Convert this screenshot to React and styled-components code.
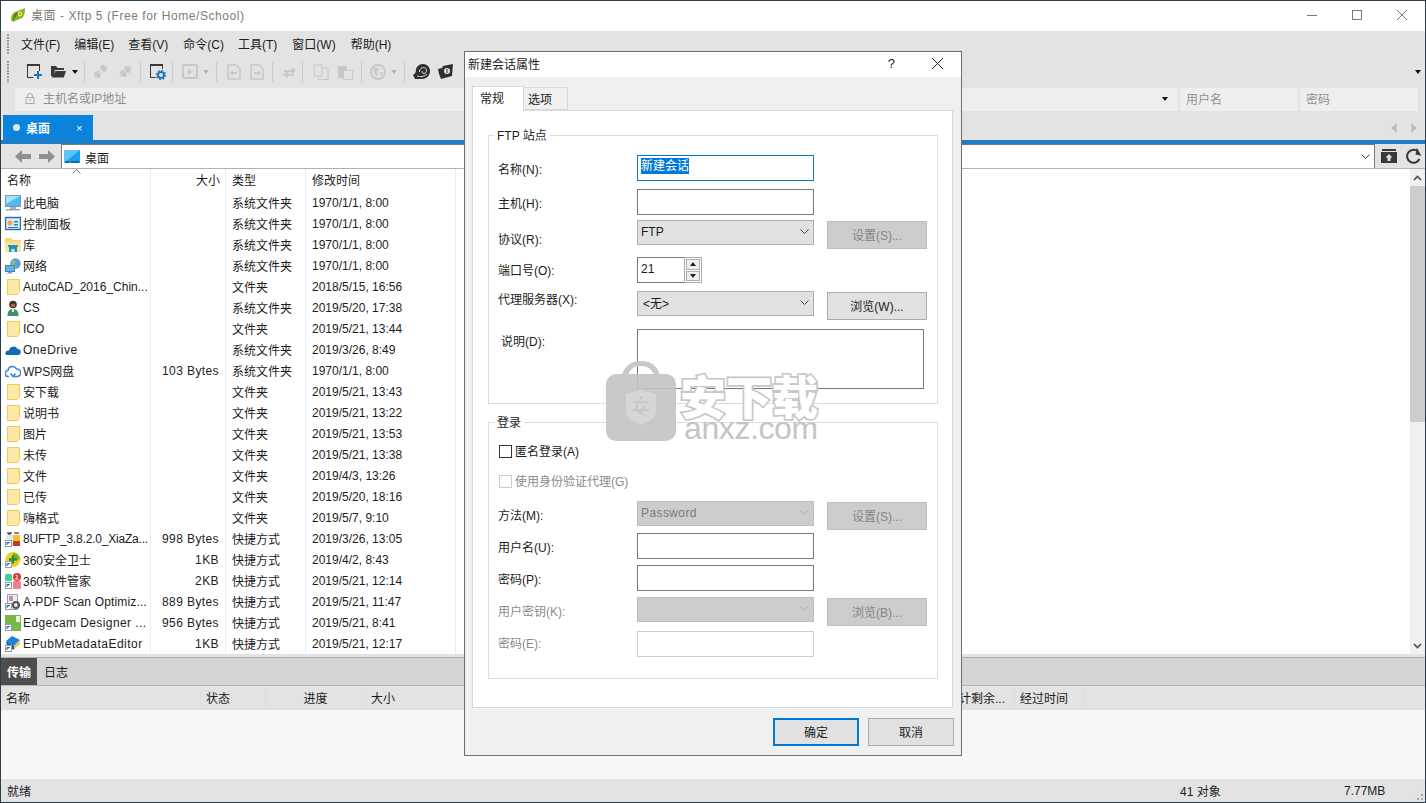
import React from 'react';
import styled, { createGlobalStyle } from 'styled-components';

const GlobalStyle = createGlobalStyle`
  html, body {
    margin: 0;
    padding: 0;
    overflow: hidden;
    background: #fff;
  }
  body {
    font-family: "Liberation Sans", "Noto Sans CJK SC", sans-serif;
    font-size: 12px;
    color: #1c1c1c;
  }
  * { box-sizing: border-box; }
  svg { display: block; flex: none; }
`;

const AppWindow = styled.div`
  position: relative;
  width: 1426px;
  height: 803px;
  border: 1px solid #2c3e4e;
  background: #e3e3e3;
  display: flex;
  flex-direction: column;
  overflow: hidden;
`;

const TitleBar = styled.div`
  height: 30px;
  flex: none;
  background: #fff;
  display: flex;
  align-items: center;
  padding-left: 9px;
  padding-bottom: 2px;
  color: #7c7c7c;
`;

const TitleText = styled.span`
  margin-left: 5px;
  padding-bottom: 2px;
  letter-spacing: 0.55px;
  flex: 1;
`;

const WinButtons = styled.div`
  display: flex;
  align-items: center;
  gap: 35px;
  padding-right: 18px;
`;

const Bar = styled.div`
  height: ${p => p.$h}px;
  flex: none;
  display: flex;
  align-items: center;
  position: relative;
`;

const Gripper = styled.div`
  width: 2px;
  height: ${p => p.$h}px;
  margin-left: 6px;
  background: repeating-linear-gradient(to bottom, #9a9a9a 0 2px, transparent 2px 3px);
`;

const MenuItem = styled.span`
  margin-left: ${p => p.$ml}px;
  white-space: nowrap;
`;

const Slot = styled.div`
  margin-left: ${p => p.$ml}px;
  display: flex;
  align-items: center;
`;

const ToolSep = styled.div`
  width: 1px;
  height: 20px;
  margin-left: ${p => p.$ml}px;
  background: #cdcdcd;
`;

const Caret = styled.div`
  width: 0;
  height: 0;
  margin-left: ${p => p.$ml || 0}px;
  border-left: 3.5px solid transparent;
  border-right: 3.5px solid transparent;
  border-top: 4px solid ${p => p.$off ? '#b4b4b4' : '#111'};
`;

const EndCaret = styled(Caret)`
  margin-left: auto;
  margin-right: 4px;
`;

const AddressWrap = styled.div`
  height: 28px;
  flex: none;
  padding: 1px 7px 4px 14px;
  display: flex;
  gap: 2px;
`;

const AddressField = styled.div`
  width: ${p => p.$w ? p.$w + 'px' : 'auto'};
  flex: ${p => p.$w ? 'none' : 1};
  background: #eeeeee;
  display: flex;
  align-items: center;
  padding-left: ${p => p.$pl}px;
  padding-right: 10px;
  padding-bottom: 2px;
  color: #8e8e8e;
`;

const HostText = styled.span`
  margin-left: 8px;
  padding-bottom: 2px;
  flex: 1;
`;

const TabStrip = styled.div`
  height: 25px;
  flex: none;
  display: flex;
  align-items: stretch;
  padding-left: 2px;
`;

const SessionTab = styled.div`
  width: 90px;
  background: #0a83dd;
  color: #fff;
  display: flex;
  align-items: center;
  padding-left: 10px;
  font-weight: 700;
`;

const TabDot = styled.span`
  width: 7px;
  height: 7px;
  border-radius: 50%;
  background: #d8e8f4;
  margin-right: 6px;
`;

const TabClose = styled.span`
  margin-left: 26px;
  font-weight: 400;
  font-size: 11px;
`;

const TabNav = styled.div`
  margin-left: auto;
  display: flex;
  align-items: center;
  gap: 14px;
  padding-right: 8px;
`;

const NavTriangle = styled.div`
  width: 0;
  height: 0;
  border-top: 5px solid transparent;
  border-bottom: 5px solid transparent;
  ${p => p.$left ? 'border-right: 6px solid #bdbdbd;' : 'border-left: 6px solid #bdbdbd;'}
`;

const BlueLine = styled.div`
  height: 4px;
  flex: none;
  background: #0a83dd;
  border-top: 1px solid #5f6a72;
`;

const PathBar = styled.div`
  height: 24px;
  flex: none;
  display: flex;
  align-items: stretch;
  padding-left: 14px;
`;

const PathArrows = styled.div`
  width: 46px;
  display: flex;
  align-items: center;
  gap: 8px;
`;

const PathInput = styled.div`
  width: 1314px;
  background: #fff;
  border: 1px solid #7a7a7a;
  border-bottom: none;
  display: flex;
  align-items: center;
  padding-left: 2px;
  padding-right: 4px;
`;

const PathText = styled.span`
  margin-left: 5px;
  padding-top: 2px;
  flex: 1;
`;

const PathTools = styled.div`
  flex: 1;
  display: flex;
  align-items: center;
  padding-left: 6px;
  gap: 9px;
`;

const ListArea = styled.div`
  height: 486px;
  flex: none;
  display: flex;
  background: #fff;
  border-top: 1px solid #b0b0b0;
`;

const ListTable = styled.div`
  flex: 1;
  min-width: 0;
`;

const ListRow = styled.div`
  display: grid;
  grid-template-columns: 150px 75px 80px 150px;
  height: ${p => p.$h || 21}px;
`;

const Cell = styled.div`
  position: relative;
  border-right: 1px solid #e8eef5;
  display: flex;
  align-items: center;
  white-space: nowrap;
  overflow: hidden;
  padding-left: ${p => p.$pl ?? 6}px;
  padding-right: ${p => p.$pr ?? 0}px;
  padding-bottom: ${p => p.$pb ?? 0}px;
  justify-content: ${p => p.$right ? 'flex-end' : 'flex-start'};
`;

const SortMark = styled.div`
  position: absolute;
  top: 0;
  left: 71px;
`;

const NameText = styled.span`
  margin-left: 2px;
  letter-spacing: ${p => p.$ls || 0}px;
`;

const SizeText = styled.span`
  letter-spacing: 0.4px;
`;

const Scrollbar = styled.div`
  width: 15px;
  flex: none;
  background: #f0f0f0;
  display: flex;
  flex-direction: column;
`;

const ScrollEnd = styled.div`
  height: 17px;
  display: flex;
  align-items: center;
  justify-content: center;
`;

const ScrollThumb = styled.div`
  height: 236px;
  background: #cdcdcd;
`;

const ScrollFill = styled.div`
  flex: 1;
`;

const LowerTabs = styled.div`
  margin-top: 3px;
  height: 29px;
  flex: none;
  background: #d5d5d5;
  border-top: 1px solid #adadad;
  border-bottom: 1px solid #b6b6b6;
  display: flex;
  align-items: stretch;
`;

const LowerTab = styled.div`
  width: ${p => p.$active ? 36 : 45}px;
  display: flex;
  align-items: center;
  padding-left: ${p => p.$active ? 6 : 7}px;
  background: ${p => p.$active ? '#4d4d4d' : 'transparent'};
  color: ${p => p.$active ? '#fff' : '#1c1c1c'};
  font-weight: ${p => p.$active ? 700 : 400};
`;

const TransferHead = styled.div`
  height: 24px;
  flex: none;
  display: flex;
  background: #e3e3e3;
  border-bottom: 1px solid #d7dfea;
`;

const HeadCell = styled.div`
  width: ${p => p.$w}px;
  flex: none;
  display: flex;
  align-items: center;
  justify-content: ${p => p.$center ? 'center' : 'flex-start'};
  padding-left: ${p => p.$center ? 0 : 5}px;
  border-right: 1px solid #d7dfea;
  white-space: nowrap;
  overflow: hidden;
`;

const TransferBody = styled.div`
  flex: 1;
  background: #f7f7f7;
`;

const StatusBar = styled.div`
  height: 23px;
  flex: none;
  display: flex;
  align-items: center;
  padding-left: 6px;
  position: relative;
`;

const StatusReady = styled.span`
  flex: 1;
`;

const StatusObjects = styled.span`
  width: 164px;
`;

const StatusSize = styled.span`
  width: 81px;
`;

const SizeGrip = styled.div`
  position: absolute;
  right: 1px;
  bottom: 1px;
  width: 11px;
  height: 11px;
  background: radial-gradient(circle at 1px 1px, #a9a9a9 1px, transparent 1px) 0 0 / 4px 4px;
  clip-path: polygon(100% 0, 100% 100%, 0 100%);
`;

/* dialog */
const Dialog = styled.div`
  position: absolute;
  left: 463px;
  top: 50px;
  width: 498px;
  height: 705px;
  background: #f0f0f0;
  border: 1px solid #6d6d6d;
  display: flex;
  flex-direction: column;
`;

const DialogTitle = styled.div`
  height: 25px;
  flex: none;
  background: #fff;
  display: flex;
  align-items: center;
  padding-left: 3px;
  padding-bottom: 2px;
`;

const DialogTitleText = styled.span`
  flex: 1;
`;

const HelpMark = styled.span`
  font-size: 13px;
  margin-right: 37px;
`;

const CloseSlot = styled.div`
  margin-right: 18px;
`;

const DialogTabs = styled.div`
  height: 34px;
  flex: none;
  display: flex;
  align-items: flex-end;
  padding-left: 7px;
  position: relative;
  z-index: 1;
  margin-bottom: -1px;
`;

const DialogTab = styled.div`
  height: ${p => p.$active ? 25 : 23}px;
  width: ${p => p.$active ? 52 : 45}px;
  margin-left: ${p => p.$active ? 0 : -1}px;
  margin-bottom: ${p => p.$active ? 0 : 1}px;
  background: ${p => p.$active ? '#fff' : '#f0f0f0'};
  border: 1px solid #d9d9d9;
  border-bottom: ${p => p.$active ? 'none' : '1px solid #d9d9d9'};
  display: flex;
  align-items: ${p => p.$active ? 'flex-start' : 'center'};
  padding-top: ${p => p.$active ? 2 : 0}px;
  padding-left: ${p => p.$active ? 7 : 4}px;
`;

const TabPanel = styled.div`
  margin-left: 7px;
  width: 481px;
  height: 598px;
  flex: none;
  background: #fff;
  border: 1px solid #d9d9d9;
  padding: 24px 14px 0 15px;
`;

const Group = styled.div`
  position: relative;
  border: 1px solid #dcdcdc;
  padding: ${p => p.$pt}px 9px ${p => p.$pb}px;
  margin-top: ${p => p.$mt || 0}px;
  width: 450px;
`;

const GroupTitle = styled.span`
  position: absolute;
  left: 5px;
  top: -8px;
  padding: 0 3px;
  line-height: 16px;
  background: #fff;
`;

const FieldRow = styled.div`
  display: grid;
  grid-template-columns: 139px 177px 13px 100px;
  margin-top: ${p => p.$gap || 0}px;
  align-items: start;
`;

const FieldLabel = styled.div`
  padding-top: ${p => p.$pt}px;
  padding-left: ${p => p.$pl || 0}px;
  line-height: 16px;
  color: ${p => p.$off ? '#8a8a8a' : '#1c1c1c'};
  white-space: nowrap;
`;

const TextBox = styled.div`
  height: 26px;
  background: #fff;
  border: 1px solid ${p => p.$focus ? '#0078d7' : p.$off ? '#cccccc' : '#7a7a7a'};
  padding: 2px 0 0 3px;
`;

const SelectedText = styled.span`
  display: inline-block;
  background: #0078d7;
  color: #fff;
  height: 16px;
  line-height: 17px;
`;

const SelectBox = styled.div`
  height: 25px;
  background: ${p => p.$off ? '#cccccc' : '#e1e1e1'};
  border: 1px solid ${p => p.$off ? '#bfbfbf' : '#adadad'};
  display: flex;
  align-items: center;
  justify-content: space-between;
  padding: 0 4px 2px ${p => p.$pl ?? 3}px;
  color: ${p => p.$off ? '#7a7a7a' : '#1c1c1c'};
  letter-spacing: ${p => p.$spaced ? '0.4px' : '0'};
`;

const SideButton = styled.div`
  grid-column: 4;
  margin-top: 1px;
  height: 28px;
  background: ${p => p.$off ? '#cccccc' : '#e1e1e1'};
  border: 1px solid ${p => p.$off ? '#bfbfbf' : '#adadad'};
  color: ${p => p.$off ? '#858585' : '#1c1c1c'};
  display: flex;
  align-items: center;
  justify-content: center;
  padding-bottom: 2px;
`;

const SpinWrap = styled.div`
  display: flex;
  width: 65px;
  height: 26px;
`;

const SpinInput = styled.div`
  width: 47px;
  border: 1px solid #7a7a7a;
  border-right: none;
  padding: 0 0 2px 3px;
  display: flex;
  align-items: center;
`;

const SpinButtons = styled.div`
  flex: 1;
  border: 1px solid #adadad;
  padding: 1px;
  display: flex;
  flex-direction: column;
  gap: 1px;
`;

const SpinButton = styled.div`
  flex: 1;
  background: #f0f0f0;
  border: 1px solid #adadad;
  display: flex;
  align-items: center;
  justify-content: center;
`;

const SpinCaret = styled.div`
  width: 0;
  height: 0;
  border-left: 3px solid transparent;
  border-right: 3px solid transparent;
  ${p => p.$up ? 'border-bottom: 4px solid #222;' : 'border-top: 4px solid #222;'}
`;

const NoteBox = styled.div`
  width: 287px;
  height: 60px;
  background: #fff;
  border: 1px solid #7a7a7a;
  grid-column: 2 / span 3;
`;

const CheckRow = styled.div`
  display: flex;
  align-items: center;
  height: 13px;
  margin-top: ${p => p.$gap || 0}px;
  margin-left: 1px;
  color: ${p => p.$off ? '#8a8a8a' : '#1c1c1c'};
`;

const CheckBox = styled.div`
  width: 13px;
  height: 13px;
  background: #fff;
  border: 1px solid ${p => p.$off ? '#cccccc' : '#333'};
  margin-right: 3px;
`;

const CheckText = styled.span`
  padding-bottom: 2px;
`;

const DialogFooter = styled.div`
  flex: 1;
  display: flex;
  justify-content: flex-end;
  align-items: flex-start;
  gap: 9px;
  padding: 10px 7px 0 0;
`;

const FooterButton = styled.div`
  width: 86px;
  height: 28px;
  background: #e1e1e1;
  border: ${p => p.$primary ? '2px solid #0078d7' : '1px solid #adadad'};
  display: flex;
  align-items: center;
  justify-content: center;
  padding-bottom: 2px;
`;

/* watermark */
const Watermark = styled.div`
  position: absolute;
  left: 604px;
  top: 359px;
  display: flex;
  pointer-events: none;
`;

const MarkText = styled.div`
  margin-left: 3px;
  margin-top: 11px;
  display: flex;
  flex-direction: column;
`;

const MarkCn = styled.div`
  font-family: "Noto Sans CJK SC", sans-serif;
  font-weight: 900;
  font-size: 46px;
  line-height: 46px;
  color: #fff;
  -webkit-text-stroke: 3.5px #c8c8c8;
  paint-order: stroke fill;
`;

const MarkEn = styled.div`
  font-family: "Liberation Sans", sans-serif;
  font-size: 32px;
  line-height: 22px;
  margin-left: 4px;
  letter-spacing: -0.4px;
  color: #c4c4c4;
`;

const DARK = '#383838';
const OFF = '#c8c8c8';

const Ico = ({ w = 16, h = 16, children }) => (
  <svg width={w} height={h} viewBox={`0 0 ${w} ${h}`} fill="none">{children}</svg>
);

const AppLogo = () => (
  <Ico w={16} h={16}>
    <path d="M1 13 Q1 6 5 5 L15 1 Q15 9 12 11 Q7 13 3 15 Z" fill="#86b52a" />
    <path d="M3 14 Q3 8 6 6 L9 5 Q6 9 3 14Z" fill="#4e7a18" />
    <circle cx="10" cy="7" r="2.400" fill="#d8e46a" />
    <circle cx="10" cy="7" r="1" fill="#86b52a" />
  </Ico>
);

const NewSessionIcon = () => (
  <Ico w={17} h={17}>
    <path d="M1 2h13" stroke={DARK} strokeWidth="2" />
    <path d="M1.500 2v12.500h6M13.500 2v6" stroke={DARK} />
    <path d="M12 8v8M8 12h8" stroke="#1a76b8" strokeWidth="2" />
  </Ico>
);

const OpenFolderIcon = () => (
  <Ico w={17} h={15}>
    <path d="M1 2h5l1.500 2H14v2H5L3 12H1z" fill={DARK} />
    <path d="M5.500 7H16l-2.200 6.500H1.500z" fill={DARK} />
  </Ico>
);

// the two disabled connect / disconnect plugs, drawn on a diagonal
const PlugIcon = ({ joined }) => (
  <Ico w={17} h={17}>
    <g transform="rotate(-45 8.500 8.500)" fill={OFF}>
      <rect x={joined ? 3 : 1.500} y="5" width="5" height="7" rx="1.500" />
      <rect x={joined ? 9 : 10.500} y="5" width="5" height="7" rx="1.500" />
      {joined
        ? <path d="M8 6.500h1v1H8zM8 9.500h1v1H8z" />
        : <path d="M6.500 6.500h2v1h-2zM6.500 9.500h2v1h-2z" />}
      <path d="M14 8h3v1h-3zM0 8h3v1H0z" />
    </g>
  </Ico>
);

const GearWindowIcon = () => (
  <Ico w={17} h={17}>
    <path d="M1 2h13" stroke={DARK} strokeWidth="2" />
    <path d="M1.500 2v12.500h5M13.500 2v4" stroke={DARK} />
    <circle cx="12" cy="12" r="3" stroke="#1a76b8" strokeWidth="2" />
    <circle cx="12" cy="12" r="4.600" stroke="#1a76b8" strokeWidth="1.400" strokeDasharray="1.600 2" />
  </Ico>
);

const PlayWindowIcon = () => (
  <Ico w={16} h={15}>
    <rect x="1" y="1" width="14" height="13" rx="1" stroke={OFF} strokeWidth="2" />
    <path d="M6 4.500l5 3-5 3z" fill={OFF} />
  </Ico>
);

const DocArrowIcon = ({ back }) => (
  <Ico w={14} h={16}>
    <path d="M1 1h8l4 4v10H1z" stroke={OFF} strokeWidth="1.600" />
    <path d={back ? 'M10 8H6V6L3 9l3 3v-2h4z' : 'M4 8h4V6l3 3-3 3v-2H4z'} fill={OFF} />
  </Ico>
);

const SwapIcon = () => (
  <Ico w={16} h={13}>
    <path d="M3 5h8V2l4 3.500L11 9V7H3z" fill={OFF} />
    <path d="M13 8.500H7V6.500L1 9.500 7 13v-2h6z" fill={OFF} opacity="0.9" />
  </Ico>
);

const CopyIcon = () => (
  <Ico w={16} h={16}>
    <path d="M5 4h10v11.500H5z" stroke={OFF} />
    <path d="M1 1h8v11H1z" fill="#e3e3e3" stroke={OFF} />
  </Ico>
);

const PasteIcon = () => (
  <Ico w={16} h={16}>
    <path d="M1 2h9v12H1z" fill={OFF} />
    <path d="M6.500 6.500h9v9h-9z" fill="#e3e3e3" stroke={OFF} />
  </Ico>
);

const GlobeIcon = () => (
  <Ico w={16} h={16}>
    <circle cx="8" cy="8" r="7" stroke={OFF} strokeWidth="2" />
    <path d="M4 4h4l1 2-3 2 2 2-1 3-3-4zM10 8h3l-1 3-2 1z" fill={OFF} />
  </Ico>
);

const ShellIcon = () => (
  <Ico w={17} h={15}>
    <path d="M0 11c2-1 3-3 3-5 0-3 3-6 7-6s7 3 7 7-3 8-8 8H2z" fill="#2f2f2f" />
    <path d="M6.500 8c0-3 2.500-5 5-4.300 2.500.8 2.700 4 .8 5.300-1.500 1-3.600.2-3.300-1.800M4 12c3 1 7 1 10-2" stroke="#e3e3e3" />
  </Ico>
);

const FtpMarkIcon = () => (
  <Ico w={17} h={15}>
    <path d="M1 5l4-1 1-2 10-2-1 12-11 3-2-5z" fill="#2f2f2f" />
    <circle cx="10" cy="7" r="3" fill="#e3e3e3" />
    <path d="M10 5v4" stroke="#2f2f2f" />
  </Ico>
);

const LockIcon = () => (
  <Ico w={10} h={11}>
    <path d="M2.500 4.500V3a2.500 2.500 0 0 1 5 0v1.500" stroke="#aaa" />
    <rect x="1" y="4.500" width="8" height="6" stroke="#aaa" />
    <path d="M4 7h2" stroke="#aaa" />
  </Ico>
);

const BigArrow = ({ back }) => (
  <Ico w={16} h={13}>
    <path d={back ? 'M0 6.500L7 0v4h9v5H7v4z' : 'M16 6.500L9 0v4H0v5h9v4z'} fill="#8f8f8f" />
  </Ico>
);

const Chevron = ({ color = '#444', up }) => (
  <svg width="9" height="5" viewBox="0 0 9 5" fill="none">
    <path d={up ? 'M.5 4.500l4-4 4 4' : 'M.5.5l4 4 4-4'} stroke={color} />
  </svg>
);

const ThickChevron = ({ up }) => (
  <svg width="9" height="6" viewBox="0 0 9 6" fill="none">
    <path d={up ? 'M1 5l3.500-3.500L8 5' : 'M1 1l3.500 3.500L8 1'} stroke="#505050" strokeWidth="1.700" />
  </svg>
);

const UpFolderIcon = () => (
  <Ico w={16} h={14}>
    <path d="M1 0h14v2H1z" fill={DARK} />
    <path d="M0 3h16v11H0z" fill={DARK} />
    <path d="M8 5l3.500 3.500H9.500V12h-3V8.500h-2z" fill="#e3e3e3" />
  </Ico>
);

const RefreshIcon = () => (
  <Ico w={16} h={16}>
    <path d="M13.500 11A6.500 6.500 0 1 1 12 3.500" stroke={DARK} strokeWidth="2" />
    <path d="M10 0v7h6z" fill={DARK} transform="rotate(10 12 4)" />
  </Ico>
);

const PathDesktop = () => (
  <Ico w={16} h={14}>
    <rect width="16" height="13" fill="#19a0ef" />
    <path d="M0 0h16L0 13z" fill="#5ec3f8" />
    <path d="M1 12h4M7 12h8" stroke="#1b3040" />
  </Ico>
);

const Shortcut = () => (
  <g>
    <rect x="0.500" y="9.500" width="6" height="6" fill="#fff" stroke="#9b9b9b" />
    <path d="M2 14v-2.500h2.500M2.500 13l2-2" stroke="#1f5fb4" />
  </g>
);

const FileIcon = ({ kind }) => {
  let body = null;
  switch (kind) {
    case 'pc':
      body = (
        <>
          <rect x="0.500" y="0.500" width="15" height="11" fill="#53b9f4" stroke="#7b98ad" />
          <path d="M1 1h14L1 9z" fill="#a5e0fb" />
          <path d="M5 12h6v2H5z" fill="#9fb2c0" />
          <path d="M1 14h14v1.500H1z" fill="#9aa6ae" />
        </>
      );
      break;
    case 'panel':
      body = (
        <>
          <rect x="0.500" y="1.500" width="15" height="12" fill="#d6ecfb" stroke="#1f6fa8" strokeWidth="1.400" />
          <circle cx="5" cy="7" r="2.500" fill="#f2a43a" />
          <path d="M9 5h4v1.500H9zM9 8h4v1.500H9zM3 11h10v1H3z" fill="#2a80bd" />
        </>
      );
      break;
    case 'lib':
      body = (
        <>
          <path d="M0 1h6l1.500 2H16v12H0z" fill="#f7d774" />
          <path d="M0 5h16v10H0z" fill="#fbe49a" />
          <path d="M4 9h8v6h-2.500v-3h-3v3H4z" fill="#1f8fd6" />
          <path d="M3 8h10v2H3z" fill="#1f8fd6" />
        </>
      );
      break;
    case 'net':
      body = (
        <>
          <circle cx="10.500" cy="5.500" r="5.200" fill="#5aa0d8" />
          <path d="M7 2l4 1-2 3 3 2-2 2.500L7 7z" fill="#8cc37c" />
          <rect x="0.500" y="7.500" width="9" height="6" fill="#53b9f4" stroke="#5c7d94" />
          <path d="M3 14h4v1.500H1V15h2z" fill="#8a9aa6" />
        </>
      );
      break;
    case 'folder':
      body = (
        <path d="M2.500 0.500h12v12l-2 3h-10z" fill="#fde9a5" stroke="#eccb5d" />
      );
      break;
    case 'user':
      body = (
        <>
          <circle cx="8" cy="4.500" r="3.800" fill="#4a3226" />
          <path d="M6 4h4v3H6z" fill="#a06a48" />
          <path d="M2.500 16c0-5 2-7 5.500-7s5.500 2 5.500 7z" fill="#3f8f6e" />
          <path d="M7 9h2v3H7z" fill="#e8e8e8" />
        </>
      );
      break;
    case 'onedrive':
      body = (
        <>
          <path d="M4 9a4.500 4.500 0 0 1 8.500-2A3 3 0 0 1 13 13H5z" fill="#0f6cbd" />
          <path d="M1 13c-1.500-2 0-5 3-4.500 2-.5 3 1 4 1.500l-1 3z" fill="#0f6cbd" />
        </>
      );
      break;
    case 'wps':
      body = (
        <path d="M4 13.500H3.500a3 3 0 0 1-.5-6 4.500 4.500 0 0 1 8.500-1.500 3.700 3.700 0 0 1 1 7.500H8M5.500 10.500l2.500 3 2.500-3" stroke="#3f7fe0" strokeWidth="1.500" />
      );
      break;
    case 'ftp':
      body = (
        <>
          <rect x="1" y="4" width="14" height="11" fill="#dfe6f0" />
          <path d="M8 4h7v6H8z" fill="#f4c022" />
          <path d="M2 2h5M3 3h3M9 2h5" stroke="#111" />
          <path d="M8 10h7v5H8z" fill="#c23a2c" />
          <Shortcut />
        </>
      );
      break;
    case '360safe':
      body = (
        <>
          <circle cx="8" cy="7.500" r="7.500" fill="#e9d21f" />
          <path d="M8 1a7 7 0 0 1 7 6.500H8z" fill="#6dbb2c" />
          <path d="M8 3.500v8M4 7.500h8" stroke="#2d8a2d" strokeWidth="2.400" />
          <Shortcut />
        </>
      );
      break;
    case '360mgr':
      body = (
        <>
          <rect x="0" y="1" width="7" height="7" rx="1.500" fill="#3fd08a" />
          <rect x="8" y="8" width="8" height="8" rx="1.500" fill="#f47f86" />
          <rect x="0" y="9" width="7" height="7" fill="#ef7d84" />
          <circle cx="12" cy="4" r="4" fill="#d8333a" />
          <path d="M10.500 3c1-1.500 3-.5 1.500 1L10.500 6h3" stroke="#fff" />
          <Shortcut />
        </>
      );
      break;
    case 'pdf':
      body = (
        <>
          <path d="M2.500 0.500h10v15h-10z" fill="#f3eef6" stroke="#9b9bb0" />
          <path d="M4 2h4v5H4z" fill="#c888c8" />
          <circle cx="11" cy="11" r="3" stroke="#555" strokeWidth="2" />
          <Shortcut />
        </>
      );
      break;
    case 'edge':
      body = (
        <>
          <rect x="0" y="0" width="16" height="16" fill="#7ab648" />
          <path d="M11 1h4v6h-4z" fill="#e9f3dd" />
          <Shortcut />
        </>
      );
      break;
    case 'epub':
      body = (
        <>
          <path d="M1 5l6-5 8 4-6 6z" fill="#1d82d8" />
          <path d="M1 5l8 5v4L2 10z" fill="#115fa8" />
          <path d="M9 10l6-5v3l-6 5z" fill="#f4c33a" />
          <Shortcut />
        </>
      );
      break;
    default:
      break;
  }
  return <Ico w={16} h={16}>{body}</Ico>;
};

// kind, name, size, type, date, letter spacing of the name
const rows = [
  ['pc', '此电脑', '', '系统文件夹', '1970/1/1, 8:00'],
  ['panel', '控制面板', '', '系统文件夹', '1970/1/1, 8:00'],
  ['lib', '库', '', '系统文件夹', '1970/1/1, 8:00'],
  ['net', '网络', '', '系统文件夹', '1970/1/1, 8:00'],
  ['folder', 'AutoCAD_2016_Chin...', '', '文件夹', '2018/5/15, 16:56'],
  ['user', 'CS', '', '系统文件夹', '2019/5/20, 17:38'],
  ['folder', 'ICO', '', '文件夹', '2019/5/21, 13:44'],
  ['onedrive', 'OneDrive', '', '系统文件夹', '2019/3/26, 8:49', 0.5],
  ['wps', 'WPS网盘', '103 Bytes', '系统文件夹', '1970/1/1, 8:00'],
  ['folder', '安下载', '', '文件夹', '2019/5/21, 13:43'],
  ['folder', '说明书', '', '文件夹', '2019/5/21, 13:22'],
  ['folder', '图片', '', '文件夹', '2019/5/21, 13:53'],
  ['folder', '未传', '', '文件夹', '2019/5/21, 13:38'],
  ['folder', '文件', '', '文件夹', '2019/4/3, 13:26'],
  ['folder', '已传', '', '文件夹', '2019/5/20, 18:16'],
  ['folder', '嗨格式', '', '文件夹', '2019/5/7, 9:10'],
  ['ftp', '8UFTP_3.8.2.0_XiaZa...', '998 Bytes', '快捷方式', '2019/3/26, 13:05', -0.2],
  ['360safe', '360安全卫士', '1KB', '快捷方式', '2019/4/2, 8:43'],
  ['360mgr', '360软件管家', '2KB', '快捷方式', '2019/5/21, 12:14'],
  ['pdf', 'A-PDF Scan Optimiz...', '889 Bytes', '快捷方式', '2019/5/21, 11:47', 0.15],
  ['edge', 'Edgecam Designer ...', '956 Bytes', '快捷方式', '2019/5/21, 8:41', 0.4],
  ['epub', 'EPubMetadataEditor', '1KB', '快捷方式', '2019/5/21, 12:17', 0.5],
];

const menus = [
  ['文件(F)', 12], ['编辑(E)', 14], ['查看(V)', 14], ['命令(C)', 15],
  ['工具(T)', 14], ['窗口(W)', 15], ['帮助(H)', 15],
];

const transferCols = [
  ['名称', 200], ['状态', 65], ['进度', 100, true], ['大小', 576],
  ['估计剩余...', 73], ['经过时间', 70],
];

const App = () => (
  <AppWindow>
    <GlobalStyle />
    <TitleBar>
      <AppLogo />
      <TitleText>桌面 - Xftp 5 (Free for Home/School)</TitleText>
      <WinButtons>
        <svg width="10" height="10" viewBox="0 0 10 10"><path d="M0 5.500h10" stroke="#7a7a7a" /></svg>
        <svg width="10" height="10" viewBox="0 0 10 10"><rect x=".5" y=".5" width="9" height="9" fill="none" stroke="#7a7a7a" /></svg>
        <svg width="10" height="10" viewBox="0 0 10 10"><path d="M0 0l10 10M10 0L0 10" stroke="#7a7a7a" /></svg>
      </WinButtons>
    </TitleBar>

    <Bar $h={25}>
      <Gripper $h={20} />
      {menus.map(([label, ml]) => (
        <MenuItem key={label} $ml={ml}>{label}</MenuItem>
      ))}
    </Bar>

    <Bar $h={31}>
      <Gripper $h={22} />
      <Slot $ml={17}><NewSessionIcon /></Slot>
      <Slot $ml={7}><OpenFolderIcon /></Slot>
      <Caret $ml={5} />
      <ToolSep $ml={6} />
      <Slot $ml={7}><PlugIcon /></Slot>
      <Slot $ml={8}><PlugIcon joined /></Slot>
      <ToolSep $ml={6} />
      <Slot $ml={8}><GearWindowIcon /></Slot>
      <ToolSep $ml={6} />
      <Slot $ml={9}><PlayWindowIcon /></Slot>
      <Caret $off $ml={5} />
      <ToolSep $ml={7} />
      <Slot $ml={10}><DocArrowIcon back /></Slot>
      <Slot $ml={9}><DocArrowIcon /></Slot>
      <ToolSep $ml={8} />
      <Slot $ml={8}><SwapIcon /></Slot>
      <ToolSep $ml={5} />
      <Slot $ml={10}><CopyIcon /></Slot>
      <Slot $ml={8}><PasteIcon /></Slot>
      <ToolSep $ml={8} />
      <Slot $ml={8}><GlobeIcon /></Slot>
      <Caret $off $ml={5} />
      <ToolSep $ml={7} />
      <Slot $ml={8}><ShellIcon /></Slot>
      <Slot $ml={7}><FtpMarkIcon /></Slot>
      <EndCaret />
    </Bar>

    <AddressWrap>
      <AddressField $pl={10}>
        <LockIcon />
        <HostText>主机名或IP地址</HostText>
        <Caret />
      </AddressField>
      <AddressField $w={118} $pl={6}>用户名</AddressField>
      <AddressField $w={118} $pl={6}>密码</AddressField>
    </AddressWrap>

    <TabStrip>
      <SessionTab>
        <TabDot />
        桌面
        <TabClose>×</TabClose>
      </SessionTab>
      <TabNav>
        <NavTriangle $left />
        <NavTriangle />
      </TabNav>
    </TabStrip>
    <BlueLine />

    <PathBar>
      <PathArrows>
        <BigArrow back />
        <BigArrow />
      </PathArrows>
      <PathInput>
        <PathDesktop />
        <PathText>桌面</PathText>
        <Chevron color="#444" />
      </PathInput>
      <PathTools>
        <UpFolderIcon />
        <RefreshIcon />
      </PathTools>
    </PathBar>

    <ListArea>
      <ListTable>
        <ListRow $h={23}>
          <Cell $pb={2}>
            名称
            <SortMark><Chevron color="#777" up /></SortMark>
          </Cell>
          <Cell $right $pr={5} $pb={2}>大小</Cell>
          <Cell $pb={2}>类型</Cell>
          <Cell $pb={2}>修改时间</Cell>
        </ListRow>
        {rows.map(([kind, name, size, type, date, spacing]) => (
          <ListRow key={name}>
            <Cell $pl={4}>
              <FileIcon kind={kind} />
              <NameText $ls={spacing}>{name}</NameText>
            </Cell>
            <Cell $right $pr={6}><SizeText>{size}</SizeText></Cell>
            <Cell>{type}</Cell>
            <Cell>{date}</Cell>
          </ListRow>
        ))}
      </ListTable>
      <Scrollbar>
        <ScrollEnd><ThickChevron up /></ScrollEnd>
        <ScrollThumb />
        <ScrollFill />
        <ScrollEnd><ThickChevron /></ScrollEnd>
      </Scrollbar>
    </ListArea>

    <LowerTabs>
      <LowerTab $active>传输</LowerTab>
      <LowerTab>日志</LowerTab>
    </LowerTabs>
    <TransferHead>
      {transferCols.map(([label, w, center]) => (
        <HeadCell key={label} $w={w} $center={center}>{label}</HeadCell>
      ))}
    </TransferHead>
    <TransferBody />
    <StatusBar>
      <StatusReady>就绪</StatusReady>
      <StatusObjects>41 对象</StatusObjects>
      <StatusSize>7.77MB</StatusSize>
      <SizeGrip />
    </StatusBar>

    <Dialog>
      <DialogTitle>
        <DialogTitleText>新建会话属性</DialogTitleText>
        <HelpMark>?</HelpMark>
        <CloseSlot>
          <svg width="11" height="11" viewBox="0 0 11 11"><path d="M0 0l11 11M11 0L0 11" stroke="#222" /></svg>
        </CloseSlot>
      </DialogTitle>
      <DialogTabs>
        <DialogTab $active>常规</DialogTab>
        <DialogTab>选项</DialogTab>
      </DialogTabs>
      <TabPanel>
        <Group $pt={19} $pb={14}>
          <GroupTitle>FTP 站点</GroupTitle>
          <FieldRow>
            <FieldLabel $pt={7}>名称(N):</FieldLabel>
            <TextBox $focus><SelectedText>新建会话</SelectedText></TextBox>
          </FieldRow>
          <FieldRow $gap={8}>
            <FieldLabel $pt={7}>主机(H):</FieldLabel>
            <TextBox />
          </FieldRow>
          <FieldRow $gap={5}>
            <FieldLabel $pt={12}>协议(R):</FieldLabel>
            <SelectBox>FTP<Chevron /></SelectBox>
            <SideButton $off>设置(S)...</SideButton>
          </FieldRow>
          <FieldRow $gap={8}>
            <FieldLabel $pt={6}>端口号(O):</FieldLabel>
            <SpinWrap>
              <SpinInput>21</SpinInput>
              <SpinButtons>
                <SpinButton><SpinCaret $up /></SpinButton>
                <SpinButton><SpinCaret /></SpinButton>
              </SpinButtons>
            </SpinWrap>
          </FieldRow>
          <FieldRow $gap={8}>
            <FieldLabel $pt={1}>代理服务器(X):</FieldLabel>
            <SelectBox $pl={5}>&lt;无&gt;<Chevron /></SelectBox>
            <SideButton>浏览(W)...</SideButton>
          </FieldRow>
          <FieldRow $gap={9}>
            <FieldLabel $pt={5} $pl={3}>说明(D):</FieldLabel>
            <NoteBox />
          </FieldRow>
        </Group>
        <Group $pt={22} $pb={21} $mt={18}>
          <GroupTitle>登录</GroupTitle>
          <CheckRow><CheckBox /><CheckText>匿名登录(A)</CheckText></CheckRow>
          <CheckRow $gap={17} $off><CheckBox $off /><CheckText>使用身份验证代理(G)</CheckText></CheckRow>
          <FieldRow $gap={13}>
            <FieldLabel $pt={7}>方法(M):</FieldLabel>
            <SelectBox $off $spaced>Password<Chevron color="#aaa" /></SelectBox>
            <SideButton $off>设置(S)...</SideButton>
          </FieldRow>
          <FieldRow $gap={3}>
            <FieldLabel $pt={7}>用户名(U):</FieldLabel>
            <TextBox />
          </FieldRow>
          <FieldRow $gap={6}>
            <FieldLabel $pt={7}>密码(P):</FieldLabel>
            <TextBox />
          </FieldRow>
          <FieldRow $gap={6}>
            <FieldLabel $pt={7} $off>用户密钥(K):</FieldLabel>
            <SelectBox $off><span /><Chevron color="#aaa" /></SelectBox>
            <SideButton $off>浏览(B)...</SideButton>
          </FieldRow>
          <FieldRow $gap={5}>
            <FieldLabel $pt={5} $off>密码(E):</FieldLabel>
            <TextBox $off />
          </FieldRow>
        </Group>
      </TabPanel>
      <DialogFooter>
        <FooterButton $primary>确定</FooterButton>
        <FooterButton>取消</FooterButton>
      </DialogFooter>
    </Dialog>

    <Watermark>
      <svg width="72" height="81" viewBox="0 0 72 81" opacity="0.9">
        <path d="M17 15C20 5 27 1 36 1s16 4 19 14h-6C47 9 42 6 36 6s-11 3-13 9z" fill="#c4c4c4" />
        <rect x="1" y="14" width="70" height="67" rx="10" fill="#c4c4c4" />
        <path d="M36 30l15 4v16c0 8-7 12-15 15-8-3-15-7-15-15V34z" fill="#d2d2d2" />
        <path d="M29 42h14M36 36v3M27 50h18M33 44l-3 6 8 4M40 46l-6 8" stroke="#c2c2c2" strokeWidth="2" fill="none" />
      </svg>
      <MarkText>
        <MarkCn>安下载</MarkCn>
        <MarkEn>anxz.com</MarkEn>
      </MarkText>
    </Watermark>
  </AppWindow>
);

export default App;
